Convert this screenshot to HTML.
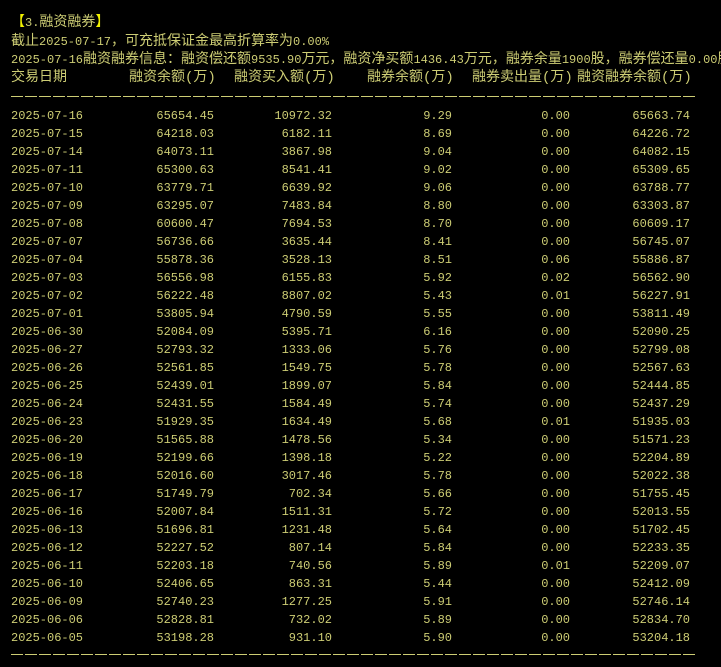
<!DOCTYPE html>
<html><head><meta charset="utf-8"><style>
body{margin:0;background:#000;width:721px;height:667px;overflow:hidden;position:relative;font-family:"Liberation Mono","Noto Sans CJK SC",monospace;color:#cdcd74;font-size:12px}
.l{position:absolute;white-space:nowrap;line-height:18px}
.h{font-family:"Liberation Mono","Noto Sans CJK SC",monospace;font-size:14px;letter-spacing:0}
.h i{font-style:normal;font-size:12px}
.y{color:#f0f000}
.dash{position:absolute;left:11px;width:684px;height:1px;background:repeating-linear-gradient(90deg,#cdcd74 0 12px,transparent 12px 14px)}
.r{position:absolute;left:0;width:721px;height:18px;line-height:18px}
.r span{position:absolute;top:0}
.c0{left:11px}
.c1{right:507px}.c2{right:389px}.c3{right:269px}.c4{right:151px}.c5{right:31px}
</style></head><body>
<div class="l h" style="left:11px;top:14px"><span class="y">【</span><i>3.</i>融资融券<span class="y">】</span></div>
<div class="l h" style="left:11px;top:33px">截止<i>2025-07-17</i>，可充抵保证金最高折算率为<i>0.00%</i></div>
<div class="l h" style="left:11px;top:51px"><i>2025-07-16</i>融资融券信息：融资偿还额<i>9535.90</i>万元，融资净买额<i>1436.43</i>万元，融券余量<i>1900</i>股，融券偿还量<i>0.00</i>股</div>
<div class="l h" style="left:11px;top:69px">交易日期</div>
<div class="l h" style="left:129px;top:69px">融资余额(万)</div>
<div class="l h" style="left:234px;top:69px">融资买入额(万)</div>
<div class="l h" style="left:367px;top:69px">融券余额(万)</div>
<div class="l h" style="left:472px;top:69px">融券卖出量(万)</div>
<div class="l h" style="left:577px;top:69px">融资融券余额(万)</div>
<div class="dash" style="top:96px"></div>
<div style="position:absolute;top:107px;left:0">
<div class="r" style="top:0px"><span class="c0">2025-07-16</span><span class="c1">65654.45</span><span class="c2">10972.32</span><span class="c3">9.29</span><span class="c4">0.00</span><span class="c5">65663.74</span></div>
<div class="r" style="top:18px"><span class="c0">2025-07-15</span><span class="c1">64218.03</span><span class="c2">6182.11</span><span class="c3">8.69</span><span class="c4">0.00</span><span class="c5">64226.72</span></div>
<div class="r" style="top:36px"><span class="c0">2025-07-14</span><span class="c1">64073.11</span><span class="c2">3867.98</span><span class="c3">9.04</span><span class="c4">0.00</span><span class="c5">64082.15</span></div>
<div class="r" style="top:54px"><span class="c0">2025-07-11</span><span class="c1">65300.63</span><span class="c2">8541.41</span><span class="c3">9.02</span><span class="c4">0.00</span><span class="c5">65309.65</span></div>
<div class="r" style="top:72px"><span class="c0">2025-07-10</span><span class="c1">63779.71</span><span class="c2">6639.92</span><span class="c3">9.06</span><span class="c4">0.00</span><span class="c5">63788.77</span></div>
<div class="r" style="top:90px"><span class="c0">2025-07-09</span><span class="c1">63295.07</span><span class="c2">7483.84</span><span class="c3">8.80</span><span class="c4">0.00</span><span class="c5">63303.87</span></div>
<div class="r" style="top:108px"><span class="c0">2025-07-08</span><span class="c1">60600.47</span><span class="c2">7694.53</span><span class="c3">8.70</span><span class="c4">0.00</span><span class="c5">60609.17</span></div>
<div class="r" style="top:126px"><span class="c0">2025-07-07</span><span class="c1">56736.66</span><span class="c2">3635.44</span><span class="c3">8.41</span><span class="c4">0.00</span><span class="c5">56745.07</span></div>
<div class="r" style="top:144px"><span class="c0">2025-07-04</span><span class="c1">55878.36</span><span class="c2">3528.13</span><span class="c3">8.51</span><span class="c4">0.06</span><span class="c5">55886.87</span></div>
<div class="r" style="top:162px"><span class="c0">2025-07-03</span><span class="c1">56556.98</span><span class="c2">6155.83</span><span class="c3">5.92</span><span class="c4">0.02</span><span class="c5">56562.90</span></div>
<div class="r" style="top:180px"><span class="c0">2025-07-02</span><span class="c1">56222.48</span><span class="c2">8807.02</span><span class="c3">5.43</span><span class="c4">0.01</span><span class="c5">56227.91</span></div>
<div class="r" style="top:198px"><span class="c0">2025-07-01</span><span class="c1">53805.94</span><span class="c2">4790.59</span><span class="c3">5.55</span><span class="c4">0.00</span><span class="c5">53811.49</span></div>
<div class="r" style="top:216px"><span class="c0">2025-06-30</span><span class="c1">52084.09</span><span class="c2">5395.71</span><span class="c3">6.16</span><span class="c4">0.00</span><span class="c5">52090.25</span></div>
<div class="r" style="top:234px"><span class="c0">2025-06-27</span><span class="c1">52793.32</span><span class="c2">1333.06</span><span class="c3">5.76</span><span class="c4">0.00</span><span class="c5">52799.08</span></div>
<div class="r" style="top:252px"><span class="c0">2025-06-26</span><span class="c1">52561.85</span><span class="c2">1549.75</span><span class="c3">5.78</span><span class="c4">0.00</span><span class="c5">52567.63</span></div>
<div class="r" style="top:270px"><span class="c0">2025-06-25</span><span class="c1">52439.01</span><span class="c2">1899.07</span><span class="c3">5.84</span><span class="c4">0.00</span><span class="c5">52444.85</span></div>
<div class="r" style="top:288px"><span class="c0">2025-06-24</span><span class="c1">52431.55</span><span class="c2">1584.49</span><span class="c3">5.74</span><span class="c4">0.00</span><span class="c5">52437.29</span></div>
<div class="r" style="top:306px"><span class="c0">2025-06-23</span><span class="c1">51929.35</span><span class="c2">1634.49</span><span class="c3">5.68</span><span class="c4">0.01</span><span class="c5">51935.03</span></div>
<div class="r" style="top:324px"><span class="c0">2025-06-20</span><span class="c1">51565.88</span><span class="c2">1478.56</span><span class="c3">5.34</span><span class="c4">0.00</span><span class="c5">51571.23</span></div>
<div class="r" style="top:342px"><span class="c0">2025-06-19</span><span class="c1">52199.66</span><span class="c2">1398.18</span><span class="c3">5.22</span><span class="c4">0.00</span><span class="c5">52204.89</span></div>
<div class="r" style="top:360px"><span class="c0">2025-06-18</span><span class="c1">52016.60</span><span class="c2">3017.46</span><span class="c3">5.78</span><span class="c4">0.00</span><span class="c5">52022.38</span></div>
<div class="r" style="top:378px"><span class="c0">2025-06-17</span><span class="c1">51749.79</span><span class="c2">702.34</span><span class="c3">5.66</span><span class="c4">0.00</span><span class="c5">51755.45</span></div>
<div class="r" style="top:396px"><span class="c0">2025-06-16</span><span class="c1">52007.84</span><span class="c2">1511.31</span><span class="c3">5.72</span><span class="c4">0.00</span><span class="c5">52013.55</span></div>
<div class="r" style="top:414px"><span class="c0">2025-06-13</span><span class="c1">51696.81</span><span class="c2">1231.48</span><span class="c3">5.64</span><span class="c4">0.00</span><span class="c5">51702.45</span></div>
<div class="r" style="top:432px"><span class="c0">2025-06-12</span><span class="c1">52227.52</span><span class="c2">807.14</span><span class="c3">5.84</span><span class="c4">0.00</span><span class="c5">52233.35</span></div>
<div class="r" style="top:450px"><span class="c0">2025-06-11</span><span class="c1">52203.18</span><span class="c2">740.56</span><span class="c3">5.89</span><span class="c4">0.01</span><span class="c5">52209.07</span></div>
<div class="r" style="top:468px"><span class="c0">2025-06-10</span><span class="c1">52406.65</span><span class="c2">863.31</span><span class="c3">5.44</span><span class="c4">0.00</span><span class="c5">52412.09</span></div>
<div class="r" style="top:486px"><span class="c0">2025-06-09</span><span class="c1">52740.23</span><span class="c2">1277.25</span><span class="c3">5.91</span><span class="c4">0.00</span><span class="c5">52746.14</span></div>
<div class="r" style="top:504px"><span class="c0">2025-06-06</span><span class="c1">52828.81</span><span class="c2">732.02</span><span class="c3">5.89</span><span class="c4">0.00</span><span class="c5">52834.70</span></div>
<div class="r" style="top:522px"><span class="c0">2025-06-05</span><span class="c1">53198.28</span><span class="c2">931.10</span><span class="c3">5.90</span><span class="c4">0.00</span><span class="c5">53204.18</span></div>
</div>
<div class="dash" style="top:654px"></div>
</body></html>
